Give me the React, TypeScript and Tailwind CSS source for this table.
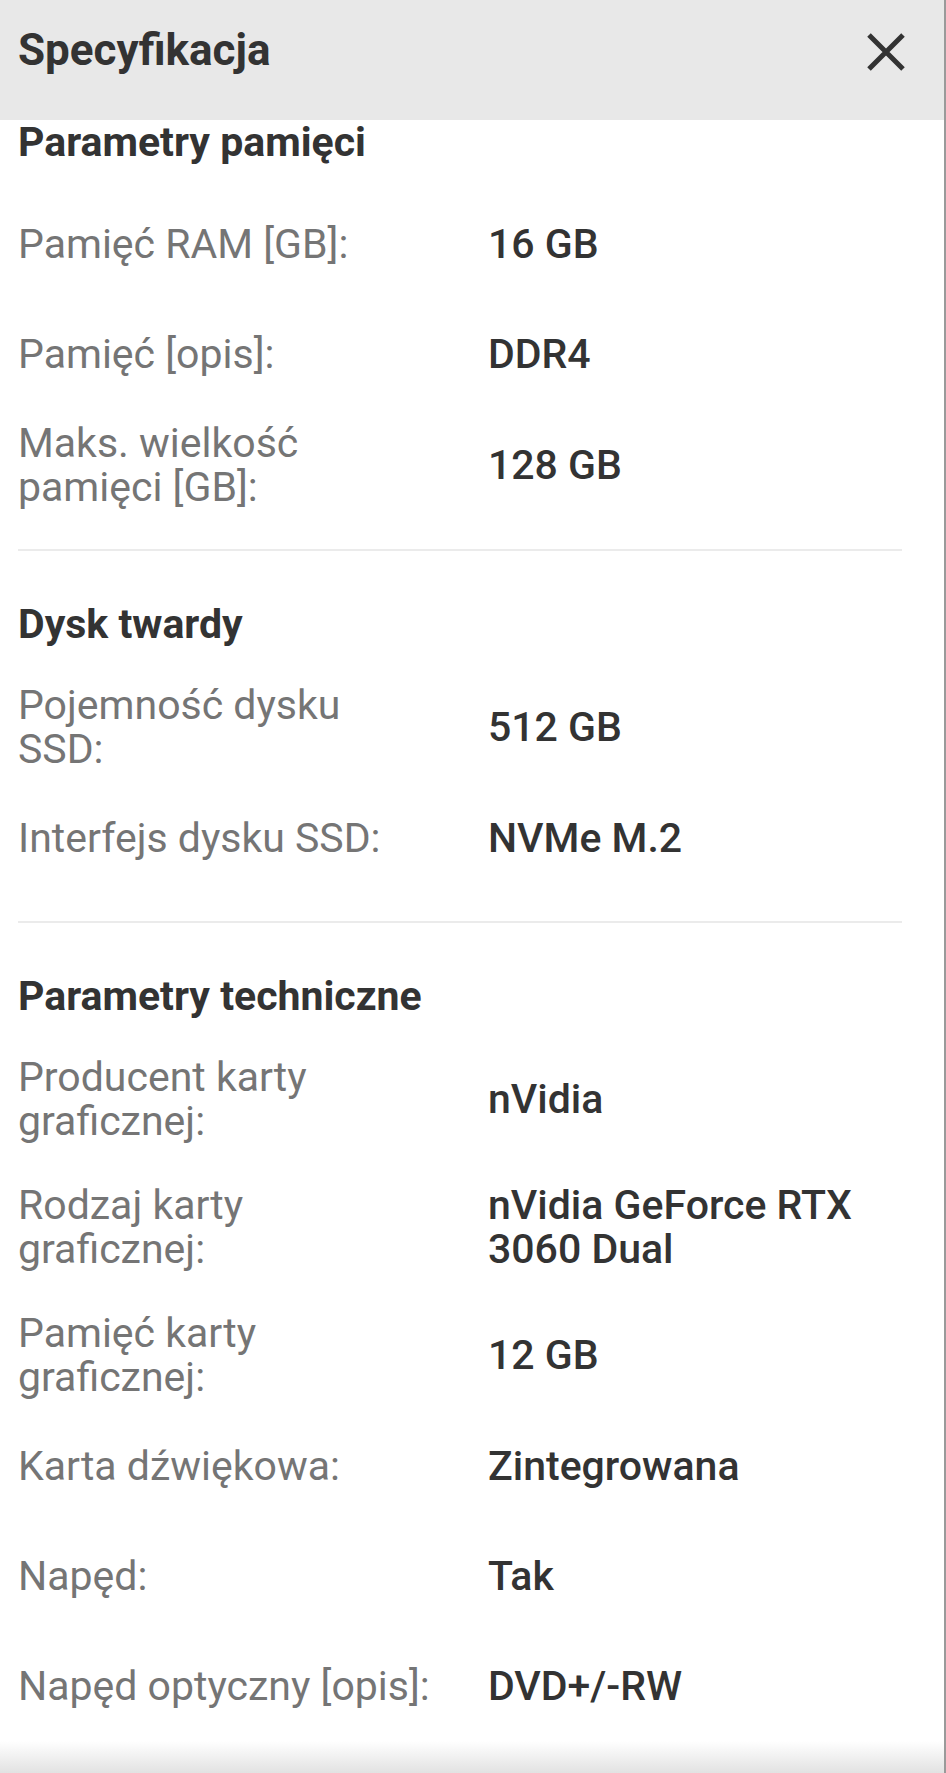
type Spec = { label: string; value: string };

type Section = { title: string; items: Spec[] };

const sections: Section[] = [
  {
    title: 'Parametry pamięci',
    items: [
      { label: 'Pamięć RAM [GB]:', value: '16 GB' },
      { label: 'Pamięć [opis]:', value: 'DDR4' },
      { label: 'Maks. wielkość pamięci [GB]:', value: '128 GB' },
    ],
  },
  {
    title: 'Dysk twardy',
    items: [
      { label: 'Pojemność dysku SSD:', value: '512 GB' },
      { label: 'Interfejs dysku SSD:', value: 'NVMe M.2' },
    ],
  },
  {
    title: 'Parametry techniczne',
    items: [
      { label: 'Producent karty graficznej:', value: 'nVidia' },
      { label: 'Rodzaj karty graficznej:', value: 'nVidia GeForce RTX 3060 Dual' },
      { label: 'Pamięć karty graficznej:', value: '12 GB' },
      { label: 'Karta dźwiękowa:', value: 'Zintegrowana' },
      { label: 'Napęd:', value: 'Tak' },
      { label: 'Napęd optyczny [opis]:', value: 'DVD+/-RW' },
    ],
  },
];

function CloseIcon() {
  return (
    <svg width="38" height="38" viewBox="0 0 38 38" fill="none" aria-hidden="true">
      <path d="M2 2L36 36M36 2L2 36" stroke="#333333" strokeWidth="5" />
    </svg>
  );
}

export default function App() {
  return (
    <div className="min-h-[1773px] w-full border-r-2 border-[#9a9a9a] bg-white font-['Roboto',sans-serif]">
      <div className="flex h-[120px] items-start bg-[#e8e8e8] pl-[18px] pr-[39px] pt-[22px]">
        <h1 className="text-[44px] font-bold leading-[56px] text-[#333333]">Specyfikacja</h1>
        <button type="button" aria-label="Zamknij" className="ml-auto mt-[11px]">
          <CloseIcon />
        </button>
      </div>

      <div className="pl-[18px] pr-[42px]">
        {sections.map((section, si) => (
          <div
            key={section.title}
            className={
              si < sections.length - 1
                ? 'border-b-2 border-[#ebebeb] pb-[28px]'
                : ''
            }
          >
            <h2
              className={`text-[41px] font-bold leading-[44px] text-[#333333] ${
                si === 0 ? 'pt-0' : 'pt-[51px]'
              }`}
            >
              {section.title}
            </h2>
            <div className="mt-[25px]">
              {section.items.map((item) => (
                <div key={item.label} className="flex min-h-[110px] items-center">
                  <div className="w-[470px] shrink-0 py-[12px] pr-[55px] text-[41px] leading-[44px] text-[#757575]">
                    {item.label}
                  </div>
                  <div className="min-w-0 flex-1 py-[28px] text-[41px] font-medium leading-[44px] text-[#333333]">
                    {item.value}
                  </div>
                </div>
              ))}
            </div>
          </div>
        ))}
      </div>

      <div className="h-[32px] bg-gradient-to-b from-white to-[#e2e2e2]" />
    </div>
  );
}
